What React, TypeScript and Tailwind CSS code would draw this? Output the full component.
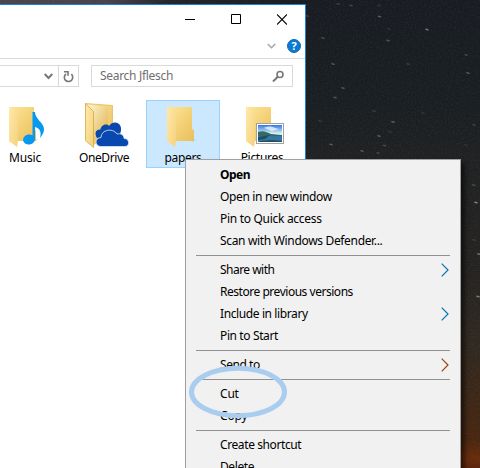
import React from 'react';

const stars: [number, number, number][] = [
  [338, 4, 0.35], [351, 5.5, 0.4], [379, 5.5, 0.25], [379.5, 16.5, 0.6], [427, 29.5, 0.8], [389, 29, 0.2],
  [323, 38, 0.45], [388, 40.5, 0.5], [333, 64, 0.55], [408, 64, 0.3], [466, 55, 0.4], [468, 73, 0.55],
  [343, 88, 0.5], [335, 97.5, 0.5], [374, 111, 0.3], [393, 122, 0.6], [320, 121, 0.25], [379, 136, 0.6],
  [331, 144.5, 0.6], [384.5, 145.5, 0.4], [362, 151, 0.5], [378, 153, 0.35], [390, 132, 0.2], [474, 125, 0.3],
  [423, 113, 0.2], [466, 145, 0.2], [307.5, 16, 0.3], [473.5, 185, 0.4], [476, 202.5, 0.95], [474, 240, 0.25],
  [479, 254, 0.8], [478, 296.5, 0.9],
];

function Wallpaper() {
  return (
    <svg className="absolute inset-0" width="480" height="468" aria-hidden="true">
      <defs>
        <linearGradient id="sky" x1="0" y1="0" x2="0" y2="1">
          <stop offset="0" stopColor="#181c22" />
          <stop offset="0.22" stopColor="#191e22" />
          <stop offset="0.36" stopColor="#202122" />
          <stop offset="0.58" stopColor="#252321" />
          <stop offset="0.74" stopColor="#302820" />
          <stop offset="0.84" stopColor="#3b2718" />
          <stop offset="0.94" stopColor="#482610" />
          <stop offset="0.98" stopColor="#682b0b" />
          <stop offset="1" stopColor="#5b230b" />
        </linearGradient>
        <linearGradient id="band" x1="0" y1="0" x2="1" y2="0">
          <stop offset="0" stopColor="#46444d" />
          <stop offset="0.35" stopColor="#46434e" />
          <stop offset="0.55" stopColor="#22232b" />
          <stop offset="1" stopColor="#181c22" />
        </linearGradient>
        <filter id="grain" x="0" y="0" width="100%" height="100%">
          <feTurbulence type="fractalNoise" baseFrequency="0.6" numOctaves="2" seed="4" />
          <feColorMatrix type="matrix" values="0 0 0 0 0.5  0 0 0 0 0.5  0 0 0 0 0.5  0.5 0 0 0 -0.2" />
        </filter>
      </defs>
      <rect width="480" height="468" fill="url(#sky)" />
      <rect width="306" height="4" fill="url(#band)" />
      <rect width="480" height="468" filter="url(#grain)" opacity="0.3" />
      {stars.map(([x, y, o], i) => (
        <ellipse key={i} cx={x} cy={y} rx="2" ry="0.8" transform={`rotate(14 ${x} ${y})`} fill="#9a9fa0" opacity={o * 0.8} />
      ))}
    </svg>
  );
}

type Kind = 'music' | 'onedrive' | 'plain' | 'pictures';

function FolderIcon({ kind }: { kind: Kind }) {
  return (
    <svg width="50" height="48" viewBox="0 0 50 48" className="shrink-0" aria-hidden="true">
      <defs>
        <linearGradient id="back" x1="0" y1="0" x2="1" y2="1">
          <stop stopColor="#ffe69a" />
          <stop offset="1" stopColor="#e9be58" />
        </linearGradient>
        <linearGradient id="front" x1="0" y1="0" x2="1" y2="1">
          <stop stopColor="#ffe9aa" />
          <stop offset="1" stopColor="#f5d27c" />
        </linearGradient>
        <linearGradient id="glass" x1="0" y1="0" x2="1" y2="1">
          <stop stopColor="#fff6cf" />
          <stop offset="1" stopColor="#dcae48" />
        </linearGradient>
        <linearGradient id="photo" x1="0" y1="0" x2="0" y2="1">
          <stop stopColor="#3478df" />
          <stop offset="0.4" stopColor="#b2d7f5" />
          <stop offset="0.55" stopColor="#edf6f8" />
        </linearGradient>
      </defs>
      {kind === 'onedrive' ? (
        <g>
          <path d="M6.500 3.500l27 2V32L14 45z" fill="url(#back)" stroke="#d9b654" strokeWidth=".7" />
          <path d="M9 5l20 2.500V33L14.500 42z" fill="url(#glass)" />
          <path d="M6.500 3.500l8 8v36L6.500 40.500z" fill="url(#front)" stroke="#d3aa42" strokeWidth=".8" />
          <path d="M18 38c-3-5-1-9 3.500-8.500C22 25 28 23 30 26c4-6 13-4 12 4.500L40 38z" fill="#0948ae" />
          <path d="M21.500 46.500c-6-.5-6-9 .5-9 0-8 12-10 16-3.500 4-1 7 1 7 4.500 6 0 6 8 1 8z" fill="#0948ae" stroke="#dce8fa" strokeWidth=".8" />
        </g>
      ) : (
        <g>
          <path d="M34 40l5-1-5 3z" fill="#9ba7ad" opacity=".35" />
          <path d="M9 7h25v21.500l2 2V41H9z" fill="url(#back)" />
          <path d="M9 7l9 5v29l-1 6-8-6z" fill="url(#front)" />
        </g>
      )}
      {kind === 'music' && (
        <g fill="#0799ef">
          <ellipse cx="29" cy="39.500" rx="6" ry="5" transform="rotate(-10 29 39.5)" />
          <path d="M32.500 12H35c0 7 9 11 9 17 0 4-2 6-4 9 2-7-1-10-5-11v13h-2.500z" />
        </g>
      )}
      {kind === 'pictures' && (
        <g>
          <rect x="19.500" y="23.500" width="27" height="20" fill="#fff" stroke="#a2a2a2" />
          <rect x="21" y="25" width="24" height="17" fill="url(#photo)" />
          <path d="M21 32c5-2 9 0 13 2l11 1v3H21z" fill="#386960" />
          <path d="M21 36h24v6H21z" fill="#3478a2" />
          <path d="M21 37l12-2-5 4-7 1zM23 41l12-1 10 1v1H23z" fill="#214e66" />
          <path d="M27 28c3-2 8-2 11 0l4 1-7 2z" fill="#fff" opacity=".7" />
        </g>
      )}
    </svg>
  );
}

function Tile({ label, kind, className = '', labelClass }: { label: string; kind: Kind; className?: string; labelClass: string }) {
  return (
    <div className={`flex h-[68px] w-[74px] shrink-0 flex-col items-center border ${className}`}>
      <div className="-mt-px h-[48px] w-[50px]"><FolderIcon kind={kind} /></div>
      <span className={`mt-[2px] whitespace-nowrap leading-4 ${labelClass}`}>{label}</span>
    </div>
  );
}

function Row({ label, track, bold, arrow }: { label: string; track: string; bold?: boolean; arrow?: string }) {
  return (
    <div className="flex h-[22px] shrink-0 items-center justify-between pl-[34px] pr-[11px]">
      <span className={`whitespace-nowrap leading-[22px] ${track} ${bold ? 'font-bold' : ''}`}>{label}</span>
      {arrow && (
        <svg width="8" height="14" viewBox="0 0 8 14" fill="none" aria-hidden="true">
          <path d="M.7 .7L7 7 .7 13.3" stroke={arrow} strokeWidth="1.2" />
        </svg>
      )}
    </div>
  );
}

function Separator() {
  return <div className="mx-[10px] h-[7px] shrink-0 pt-[3px]"><div className="h-px bg-[#919191]" /></div>;
}

export default function App() {
  return (
    <main className="relative h-[468px] w-[480px] overflow-hidden bg-[#1a1e22] font-['Noto_Sans',sans-serif] text-[12px] text-black">
      <Wallpaper />
      <section className="relative flex h-full w-[306px] flex-col pt-[4px]">
        <div className="flex grow flex-col border-r border-t border-[#1c82d6] bg-white">
          <header className="flex h-[28px] shrink-0 items-center justify-end gap-[36px] pr-[18px]">
            <svg width="10" height="11"><path d="M0 5.5h10" stroke="#000" /></svg>
            <svg width="10" height="11"><path d="M.5 .5h9v9h-9z" fill="none" stroke="#000" /></svg>
            <svg width="10" height="11"><path d="M0 .5l10 10M10 .5L0 10.5" stroke="#000" strokeWidth="1.1" /></svg>
          </header>
          <div className="flex h-[26px] shrink-0 items-center justify-end gap-[11px] border-b border-[#dadada] pr-[4px]">
            <svg width="9" height="6"><path d="M.7 1l3.8 3.8L8.3 1" fill="none" stroke="#a5a5a5" strokeWidth="1.4" /></svg>
            <div className="flex size-[14px] items-center justify-center rounded-full border border-[#1769af] bg-[#087bd4] font-['Open_Sans',sans-serif] text-[11px] font-bold leading-none text-white">?</div>
          </div>
          <div className="mt-[6px] flex h-[22px] shrink-0 gap-[12px]">
            <div className="flex w-[79px] border border-l-0 border-[#d9d9d9]">
              <div className="flex w-[59px] items-center justify-end border-r border-[#d9d9d9] pr-[5px]">
                <svg width="9" height="7"><path d="M.7 1l3.8 4L8.3 1" fill="none" stroke="#777" strokeWidth="2" /></svg>
              </div>
              <div className="flex grow items-center justify-center">
                <svg width="11" height="13" viewBox="0 0 11 13" fill="none" stroke="#777" strokeWidth="1.6">
                  <path d="M8.300 4.200A4.200 4.200 0 1 1 3 4M1 1.800h4v4" />
                </svg>
              </div>
            </div>
            <div className="flex w-[202px] items-center justify-between border border-[#d9d9d9] pl-[8px] pr-[7px] text-[#707070]">
              <span className="whitespace-nowrap tracking-[-0.3px]">Search Jflesch</span>
              <svg width="13" height="13" viewBox="0 0 13 13" fill="none" stroke="#777"><circle cx="8" cy="4.500" r="3" strokeWidth="1.6" /><path d="M5.8 6.8L1 11.5" strokeWidth="2" /></svg>
            </div>
          </div>
          <div className="-ml-[12px] mt-[13px] flex gap-[5px]">
            <Tile label="Music" kind="music" className="border-transparent" labelClass="tracking-[-0.2px]" />
            <Tile label="OneDrive" kind="onedrive" className="border-transparent" labelClass="tracking-[-0.4px]" />
            <Tile label="papers" kind="plain" className="border-[#99d1ff] bg-[#cce8ff]" labelClass="tracking-[-0.3px]" />
            <Tile label="Pictures" kind="pictures" className="border-transparent" labelClass="tracking-[-0.3px]" />
          </div>
        </div>
      </section>
      <nav className="absolute left-[185px] top-[159px] flex h-[340px] w-[276px] flex-col border border-[#a0a0a0] bg-[#f1f1f1] pt-[4px] shadow-[4px_4px_4px_rgba(0,0,0,0.5)]">
        <Row label="Open" track="tracking-[-0.5px]" bold />
        <Row label="Open in new window" track="tracking-[-0.34px]" />
        <Row label="Pin to Quick access" track="tracking-[-0.3px]" />
        <Row label="Scan with Windows Defender..." track="tracking-[-0.33px]" />
        <Separator />
        <Row label="Share with" track="tracking-[-0.53px]" arrow="#0874ae" />
        <Row label="Restore previous versions" track="tracking-[-0.47px]" />
        <Row label="Include in library" track="tracking-[-0.39px]" arrow="#0874ae" />
        <Row label="Pin to Start" track="tracking-[-0.38px]" />
        <Separator />
        <Row label="Send to" track="tracking-[-0.45px]" arrow="#a04210" />
        <Separator />
        <Row label="Cut" track="tracking-[-0.2px]" />
        <Row label="Copy" track="tracking-[-0.2px]" />
        <Separator />
        <Row label="Create shortcut" track="tracking-[-0.4px]" />
        <Row label="Delete" track="tracking-[-0.4px]" />
      </nav>
      <svg className="absolute left-[186px] top-[363px]" width="104" height="58" aria-hidden="true">
        <ellipse cx="52" cy="29" rx="46.500" ry="23.800" fill="none" stroke="#a9cdef" strokeWidth="5" />
      </svg>
    </main>
  );
}
